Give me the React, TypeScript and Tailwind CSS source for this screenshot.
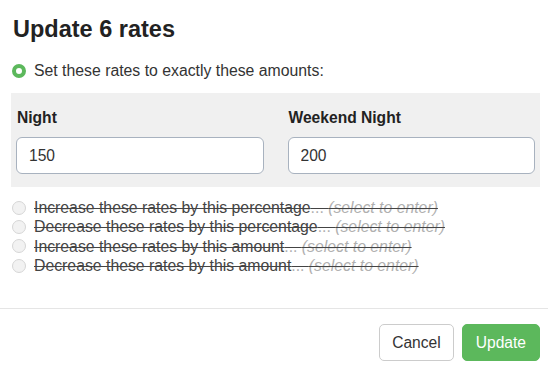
import React from "react";

const options = [
  "Increase these rates by this percentage",
  "Decrease these rates by this percentage",
  "Increase these rates by this amount",
  "Decrease these rates by this amount",
];

const rates = [
  { label: "Night", value: "150" },
  { label: "Weekend Night", value: "200" },
];

export default function App() {
  return (
    <div
      className="w-[548px] h-[373px] bg-white text-[#333] flex flex-col"
      style={{ fontFamily: '"Liberation Sans", Arial, sans-serif' }}
    >
      <h1 className="pt-[15px] pl-[13px] text-[23.5px] leading-[28px] font-bold text-[#222]">
        Update 6 rates
      </h1>

      <label className="mt-[18px] ml-[12px] flex items-center gap-[8px] text-[15.8px] leading-[20px]">
        <span className="w-[14px] h-[14px] rounded-full border-[4px] border-[#5cb85c] bg-white shrink-0" />
        <span>Set these rates to exactly these amounts:</span>
      </label>

      <div className="mt-[12px] ml-[11px] mr-[8px] bg-[#f0f0f0] pt-[15px] pb-[13px] pl-[5px] pr-[5px] grid grid-cols-2 gap-x-[24px]">
        {rates.map((r) => (
          <div key={r.label} className="flex flex-col">
            <span className="pl-[1px] text-[15.6px] leading-[20px] font-bold text-[#222]">
              {r.label}
            </span>
            <input
              type="text"
              defaultValue={r.value}
              className="mt-[9px] h-[37px] rounded-[6px] border border-[#a8b2bf] bg-white px-[12px] text-[15.6px] text-[#333] outline-none"
            />
          </div>
        ))}
      </div>

      <div className="mt-[11px] ml-[12px] flex flex-col">
        {options.map((o) => (
          <div key={o} className="flex items-center gap-[8px] text-[15.8px] leading-[19.3px]">
            <span className="w-[14px] h-[14px] rounded-full border border-[#d6d6d6] bg-[#f2f2f2] shrink-0" />
            <span className="line-through text-[#444]">
              {o}
              <span className="text-[#b0b0b0]">
                ... <i>(select to enter)</i>
              </span>
            </span>
          </div>
        ))}
      </div>

      <div className="mt-[33px] border-t border-[#e5e5e5]" />

      <div className="mt-[15px] mr-[8px] flex justify-end gap-[8px]">
        <button
          type="button"
          className="h-[37px] rounded-[5px] border border-[#cccccc] bg-white px-[12px] text-[15.6px] text-[#333]"
        >
          Cancel
        </button>
        <button
          type="button"
          className="h-[37px] rounded-[5px] border border-[#5cb85c] bg-[#5cb85c] px-[13px] text-[15.6px] text-white"
        >
          Update
        </button>
      </div>
    </div>
  );
}
